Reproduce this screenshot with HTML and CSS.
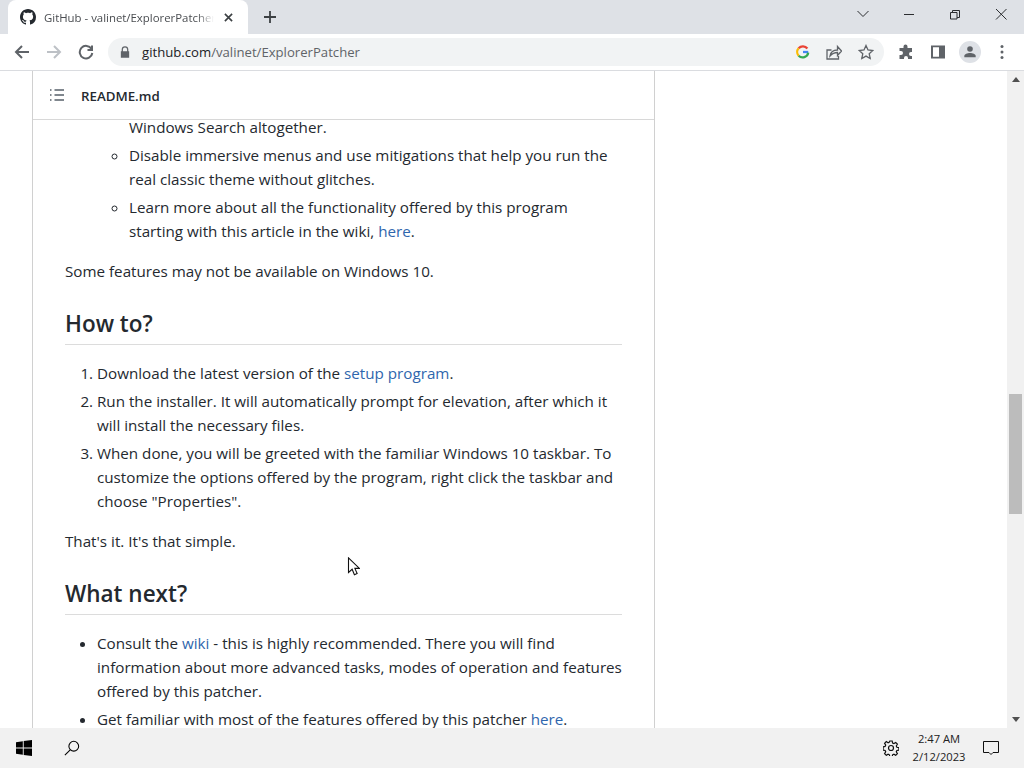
FILE: index.html
```html
<!DOCTYPE html>
<html>
	<head>
		<meta charset="utf-8">
		<title>GitHub - valinet/ExplorerPatcher</title>
		<link rel="stylesheet" href="styles.css">
	</head>
	<body>
		<div class="tab-strip">
			<div class="tab">
				<svg class="tab__favicon" viewBox="0 0 16 16"><path d="M8 0C3.58 0 0 3.58 0 8c0 3.54 2.29 6.53 5.47 7.59.4.07.55-.17.55-.38 0-.19-.01-.82-.01-1.49-2.01.37-2.53-.49-2.69-.94-.09-.23-.48-.94-.82-1.13-.28-.15-.68-.52-.01-.53.63-.01 1.08.58 1.23.82.72 1.21 1.87.87 2.33.66.07-.52.28-.87.51-1.07-1.78-.2-3.64-.89-3.64-3.95 0-.87.31-1.59.82-2.15-.08-.2-.36-1.02.08-2.12 0 0 .67-.21 2.2.82.64-.18 1.32-.27 2-.27.68 0 1.36.09 2 .27 1.53-1.04 2.2-.82 2.2-.82.44 1.1.16 1.92.08 2.12.51.56.82 1.27.82 2.15 0 3.07-1.87 3.75-3.65 3.95.29.25.54.73.54 1.48 0 1.07-.01 1.93-.01 2.2 0 .21.15.46.55.38A8.013 8.013 0 0016 8c0-4.42-3.58-8-8-8z"/></svg>
				<span class="tab__title">GitHub - valinet/ExplorerPatcher</span>
				<svg class="tab__close" viewBox="0 0 10 10"><path d="M1 1l8 8M9 1l-8 8"/></svg>
			</div>
			<svg class="tab-strip__new" viewBox="0 0 12 12"><path d="M6 0v12M0 6h12"/></svg>
			<div class="window-btns">
				<svg class="window-btn" viewBox="0 0 46 34"><path d="M17.500 11l5.500 5.500 5.500-5.500"/></svg>
				<svg class="window-btn" viewBox="0 0 46 34"><path d="M18 14.500h10"/></svg>
				<svg class="window-btn" viewBox="0 0 46 34"><path d="M18.500 12.500h6.500v6.500h-6.500zM20.500 12.500v-2h7v7h-2.500"/></svg>
				<svg class="window-btn" viewBox="0 0 46 34"><path d="M18 9l10.500 10.500M28.500 9l-10.500 10.500"/></svg>
			</div>
		</div>
		<div class="toolbar">
			<svg class="nav-icon" viewBox="0 0 16 16"><path d="M15 8H2M8 2L2 8l6 6"/></svg>
			<svg class="nav-icon nav-icon--off" viewBox="0 0 16 16"><path d="M1 8h13M8 2l6 6-6 6"/></svg>
			<svg class="nav-icon" viewBox="0 0 16 16"><path d="M13.500 5A6.300 6.300 0 1 0 14.300 9M14 1.500V6H9.500"/></svg>
			<div class="omnibox">
				<svg class="omnibox__lock" viewBox="0 0 12 14"><path d="M2 6V4a4 4 0 0 1 8 0v2h1v8H1V6zm1.500 0h5V4a2.500 2.500 0 0 0-5 0z"/></svg>
				<span class="omnibox__url">github.com<span class="omnibox__path">/valinet/ExplorerPatcher</span></span>
				<svg class="omni-icon" viewBox="0 0 16 16" fill="none" stroke-width="2.600">
					<path d="M14 8H8" stroke="#4285f4"/>
					<path d="M13 4a6.500 6.500 0 0 0-10-.3" stroke="#ea4335"/>
					<path d="M3 3.700a6.500 6.500 0 0 0 0 8.600" stroke="#fbbc05"/>
					<path d="M3 12.300a6.500 6.500 0 0 0 11-3.600" stroke="#34a853"/>
				</svg>
				<svg class="omni-icon omni-icon--line" viewBox="0 0 16 16"><path d="M5.500 6H1v9h11.500v-3M4 12c.6-3.600 3.500-6 7.500-6V2.500L15.500 7l-4 4.500V8.500C8.500 8.500 6 9.800 4 12z"/></svg>
				<svg class="omni-icon omni-icon--line" viewBox="0 0 16 16"><path d="M8 1.500l2 4.500 4.800.5-3.600 3.200 1 4.800L8 12.100l-4.200 2.400 1-4.800L1.200 6.500 6 6z"/></svg>
			</div>
			<svg class="tool-icon" viewBox="0 0 16 16"><path d="M5.500 2.500a2 2 0 0 1 4 0V4H14v4h-1a2 2 0 0 0 0 4h1v3H10v-1a2 2 0 0 0-4 0v1H1.500v-4H3a2 2 0 0 0 0-4H1.500V4h4z"/></svg>
			<svg class="tool-icon tool-icon--panel" viewBox="0 0 14 14"><path fill-rule="evenodd" d="M0 .500h14v13H0zM2 2.300v9.400h6V2.300z"/></svg>
			<div class="avatar"><svg viewBox="0 0 16 16"><circle cx="8" cy="4.500" r="3.200"/><path d="M1.500 14v-1.500C1.500 10 5 9 8 9s6.500 1 6.500 3.500V14z"/></svg></div>
			<svg class="tool-icon tool-icon--menu" viewBox="0 0 4 16"><circle cx="2" cy="2.500" r="1.500"/><circle cx="2" cy="8" r="1.500"/><circle cx="2" cy="13.500" r="1.500"/></svg>
		</div>
		<div class="page">
			<div class="page__scroll">
				<div class="readme">
					<div class="readme__head">
						<svg class="readme__toc" viewBox="0 0 16 16"><path d="M5.500 3h9.500M5.500 8h9.500M5.500 13h9.500M1 3h1.500M1 8h1.500M1 13h1.500"/></svg>
						<span>README.md</span>
					</div>
					<div class="markdown">
						<ul class="nested">
							<li class="nested__tail">Windows Search altogether.</li>
							<li>Disable immersive menus and use mitigations that help you run the real classic theme without glitches.</li>
							<li>Learn more about all the functionality offered by this program starting with this article in the wiki, <a>here</a>.</li>
						</ul>
						<p>Some features may not be available on Windows 10.</p>
						<h2>How to?</h2>
						<ol>
							<li>Download the latest version of the <a>setup program</a>.</li>
							<li>Run the installer. It will automatically prompt for elevation, after which it will install the necessary files.</li>
							<li>When done, you will be greeted with the familiar Windows 10 taskbar. To customize the options offered by the program, right click the taskbar and choose "Properties".</li>
						</ol>
						<p>That's it. It's that simple.</p>
						<h2>What next?</h2>
						<ul>
							<li>Consult the <a>wiki</a> - this is highly recommended. There you will find information about more advanced tasks, modes of operation and features offered by this patcher.</li>
							<li>Get familiar with most of the features offered by this patcher <a>here</a>.</li>
						</ul>
					</div>
				</div>
			</div>
			<div class="scrollbar">
				<div class="scrollbar__up"></div>
				<div class="scrollbar__track"><div class="scrollbar__thumb"></div></div>
				<div class="scrollbar__down"></div>
			</div>
			<svg class="cursor" viewBox="0 0 14 22"><path d="M1.500 1v16l4-3.500 2.500 6 3-1.300-2.500-5.700h5z"/></svg>
		</div>
		<div class="taskbar">
			<svg class="taskbar__start" viewBox="0 0 16 16"><path d="M0 2.200l6.800-1v6.400H0zM7.700 1.100L16 0v7.600H7.700zM0 8.400h6.800v6.400l-6.800-1zM7.700 8.400H16V16l-8.300-1.100z"/></svg>
			<svg class="taskbar__search" viewBox="0 0 18 18"><circle cx="11" cy="7" r="5.500"/><path d="M7 11l-6 6"/></svg>
			<svg class="taskbar__gear" viewBox="0 0 16 16"><circle cx="8" cy="8" r="2.500"/><path d="M6.800 1h2.400l.4 2 1.300.6 1.800-1.100 1.700 1.700-1.100 1.800.6 1.300 2 .4v2.400l-2 .4-.6 1.300 1.100 1.800-1.700 1.700-1.800-1.100-1.300.6-.4 2H6.800l-.4-2-1.300-.6-1.800 1.100-1.700-1.700 1.100-1.800-.6-1.300-2-.4V6.800l2-.4.6-1.300-1.100-1.800 1.700-1.700 1.800 1.100 1.300-.6z"/></svg>
			<div class="taskbar__clock"><div>2:47 AM</div><div>2/12/2023</div></div>
			<svg class="taskbar__notify" viewBox="0 0 16 16"><path d="M.5 1.500h15v11H10l-2 2-2-2H.5z"/></svg>
		</div>
	</body>
</html>
```

FILE: styles.css
```css
html, body {
	height: 100%;
}
body {
	margin: 0;
	display: flex;
	flex-direction: column;
	overflow: hidden;
	background: #fff;
	font-family: "Open Sans", "Liberation Sans", sans-serif;
}
svg {
	display: block;
	flex: none;
}

/* tab strip */
.tab-strip {
	height: 34px;
	flex: none;
	display: flex;
	align-items: flex-end;
	background: #dee1e6;
}
.tab {
	width: 240px;
	height: 34px;
	margin-left: 8px;
	box-sizing: border-box;
	padding: 0 15px 0 12px;
	display: flex;
	align-items: center;
	background: #fff;
	border-radius: 8px 8px 0 0;
}
.tab__favicon {
	width: 16px;
	height: 16px;
	fill: #24292f;
}
.tab__title {
	flex: 1;
	margin-left: 8px;
	overflow: hidden;
	white-space: nowrap;
	font-size: 11.400px;
	color: #4a4d51;
	-webkit-mask-image: linear-gradient(to right, #000 90%, transparent);
	mask-image: linear-gradient(to right, #000 90%, transparent);
}
.tab__close {
	width: 9px;
	height: 9px;
	margin-left: 10px;
	fill: none;
	stroke: #3c4043;
	stroke-width: 1.800;
}
.tab-strip__new {
	width: 12px;
	height: 12px;
	margin: 0 0 11px 16px;
	fill: none;
	stroke: #3c4043;
	stroke-width: 1.800;
}
.window-btns {
	margin-left: auto;
	display: flex;
}
.window-btn {
	width: 46px;
	height: 34px;
	fill: none;
	stroke: #2b2d30;
	stroke-width: 1;
}

/* toolbar */
.toolbar {
	height: 37px;
	flex: none;
	box-sizing: border-box;
	padding: 4px 14px 0 14px;
	display: flex;
	align-items: flex-start;
	background: #fff;
	border-bottom: 1px solid #dadce0;
}
.nav-icon {
	width: 16px;
	height: 16px;
	margin: 6px 16px 0 0;
	fill: none;
	stroke: #5f6368;
	stroke-width: 2;
}
.nav-icon--off {
	stroke: #bdc1c6;
}
.omnibox {
	width: 776px;
	height: 28px;
	margin: 0 0 0 -2px;
	box-sizing: border-box;
	padding: 0 10px 0 12px;
	display: flex;
	align-items: center;
	background: #f1f3f4;
	border-radius: 14px;
}
.omnibox__lock {
	width: 10px;
	height: 12px;
	fill: #5f6368;
}
.omnibox__url {
	flex: 1;
	margin-left: 12px;
	font-size: 13.150px;
	color: #202124;
}
.omnibox__path {
	color: #5f6368;
}
.omni-icon {
	width: 14px;
	height: 14px;
	margin-left: 18px;
}
.omni-icon--line {
	width: 16px;
	height: 16px;
	margin-left: 16px;
	fill: none;
	stroke: #5f6368;
	stroke-width: 1.300;
}
.tool-icon {
	width: 16px;
	height: 16px;
	margin: 6px 0 0 14px;
	fill: #5f6368;
}
.tool-icon--panel {
	width: 14px;
	margin-left: 17px;
}
.avatar {
	width: 22px;
	height: 22px;
	margin: 3px 0 0 14px;
	display: flex;
	align-items: center;
	justify-content: center;
	background: #dee1e6;
	border-radius: 50%;
}
.avatar svg {
	width: 14px;
	height: 14px;
	fill: #5f6368;
}
.tool-icon--menu {
	width: 4px;
	margin-left: 19px;
}

/* page */
.page {
	flex: 1;
	min-height: 0;
	display: flex;
	position: relative;
}
.page__scroll {
	flex: 1;
	overflow: hidden;
}
.readme {
	width: 621px;
	margin-left: 32px;
	height: 100%;
	border-left: 1px solid #d0d0d0;
	border-right: 1px solid #d0d0d0;
}
.readme__head {
	height: 48px;
	position: relative;
	z-index: 1;
	display: flex;
	align-items: center;
	padding-left: 16px;
	background: #fff;
	border-bottom: 1px solid #d8d8d8;
	font-size: 13.300px;
	font-weight: 600;
	color: #24292f;
}
.readme__head span {
	margin-top: 2px;
}
.readme__toc {
	width: 16px;
	height: 16px;
	margin-right: 16px;
	fill: none;
	stroke: #57606a;
	stroke-width: 1.300;
}
.markdown {
	margin-top: -5px;
	padding: 0 32px;
	font-size: 15.200px;
	line-height: 24px;
	color: #24292f;
}
.markdown p {
	margin: 0 0 16px;
}
.markdown a {
	color: #2f66ad;
}
.markdown ul,
.markdown ol {
	margin: 0 0 16px;
	padding-left: 32px;
}
.markdown ul.nested {
	padding-left: 64px;
	list-style-type: circle;
}
.nested__tail {
	list-style-type: none;
}
.markdown li + li {
	margin-top: 4px;
}
.markdown h2 {
	margin: 24px 0 16px;
	padding: 2px 0 5px;
	border-bottom: 1px solid #dcdcdc;
	font-size: 22.500px;
	line-height: 30px;
	font-weight: 600;
}

/* scrollbar */
.scrollbar {
	width: 17px;
	flex: none;
	display: flex;
	flex-direction: column;
	background: #f1f1f1;
}
.scrollbar__up,
.scrollbar__down {
	height: 17px;
	flex: none;
	display: flex;
	align-items: center;
	justify-content: center;
}
.scrollbar__up::before {
	content: "";
	border: 4px solid transparent;
	border-top: 0;
	border-bottom: 5px solid #505050;
}
.scrollbar__down::before {
	content: "";
	border: 4px solid transparent;
	border-bottom: 0;
	border-top: 5px solid #505050;
}
.scrollbar__track {
	flex: 1;
	padding-top: 306px;
}
.scrollbar__thumb {
	height: 120px;
	margin: 0 2px;
	background: #bcbcbc;
}
.cursor {
	position: absolute;
	left: 347px;
	top: 486px;
	width: 13px;
	height: 20px;
	fill: #fff;
	stroke: #111;
	stroke-width: 1.200;
}

/* taskbar */
.taskbar {
	height: 40px;
	flex: none;
	display: flex;
	align-items: center;
	background: #f1f1f1;
}
.taskbar__start {
	width: 16px;
	height: 16px;
	margin-left: 16px;
	fill: #000;
}
.taskbar__search {
	width: 16px;
	height: 16px;
	margin-left: 32px;
	fill: none;
	stroke: #000;
	stroke-width: 1.200;
}
.taskbar__gear {
	width: 16px;
	height: 16px;
	margin-left: auto;
	fill: none;
	stroke: #111;
	stroke-width: 1.200;
}
.taskbar__clock {
	width: 70px;
	margin-left: 5px;
	text-align: center;
	font-size: 11.200px;
	line-height: 18px;
	color: #222;
}
.taskbar__notify {
	width: 16px;
	height: 16px;
	margin: 0 25px 0 9px;
	fill: none;
	stroke: #111;
	stroke-width: 1;
}
```
